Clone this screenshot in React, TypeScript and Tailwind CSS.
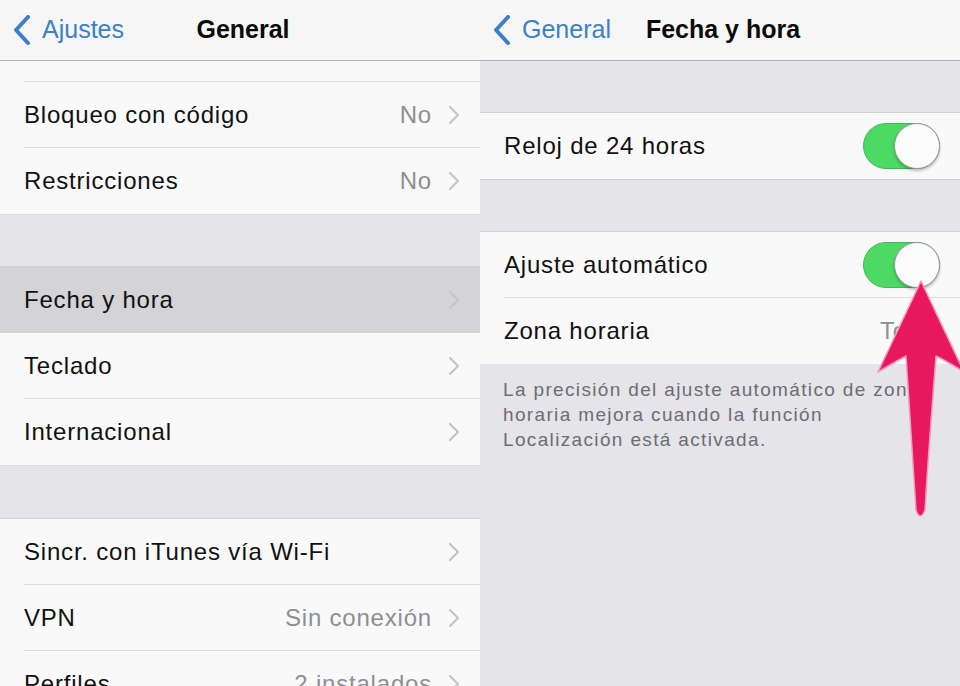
import { ReactNode } from "react";

const FONT = { fontFamily: '"Liberation Sans", Arial, sans-serif' };

const Chevron = () => (
  <svg width="12" height="20" viewBox="0 0 12 20" className="shrink-0">
    <path d="M2 2 L10 10 L2 18" fill="none" stroke="#c4c4c8" strokeWidth="2.2" strokeLinecap="round" strokeLinejoin="round" />
  </svg>
);

const BackChevron = () => (
  <svg width="20" height="30" viewBox="0 0 20 30" className="shrink-0">
    <path d="M16 2 L4 15 L16 28" fill="none" stroke="#3d80c6" strokeWidth="4" strokeLinecap="round" strokeLinejoin="round" />
  </svg>
);

const Toggle = () => (
  <div className="relative w-[77px] h-[46px] rounded-full bg-[#4cd964] border border-[#3fb956]">
    <div className="absolute right-[-1px] top-[-1px] w-[46px] h-[46px] rounded-full bg-[#fbfbfb] border border-[#9a9a9a] shadow-[0_2px_3px_rgba(0,0,0,0.25)]" />
  </div>
);

interface RowProps {
  label: string;
  detail?: string;
  chevron?: boolean;
  right?: ReactNode;
  last?: boolean;
  highlight?: boolean;
}

const Row = ({ label, detail, chevron = true, right, last, highlight }: RowProps) => (
  <div className={highlight ? "bg-[#d4d3d5] pl-[24px]" : "bg-[#f9f9f9] pl-[24px]"}>
    <div className={"h-[66px] flex items-center pr-[20px] " + (last ? "" : "border-b border-[#dcdcdf]")}>
      <span className="flex-1 text-[24px] tracking-[0.8px] text-[#111]">{label}</span>
      {detail && (
        <span className={"text-[24px] tracking-[0.8px] text-[#8e8e93] " + (chevron ? "mr-[16px]" : "")}>{detail}</span>
      )}
      {right}
      {chevron && !right && <Chevron />}
    </div>
  </div>
);

const NavBar = ({ back, title }: { back: string; title: string }) => (
  <div className="relative h-[61px] bg-[#f6f6f7] border-b border-[#b4b4b6] flex items-center">
    <div className="flex items-center pl-[12px] gap-[10px]">
      <BackChevron />
      <span className="text-[25px] text-[#3d80c6]">{back}</span>
    </div>
    <div className="absolute inset-0 flex items-center justify-center">
      <span className="text-[25px] font-bold text-[#0a0a0a] translate-x-[3px]">{title}</span>
    </div>
  </div>
);

const Gap = ({ h }: { h: string }) => <div className={"bg-[#e5e4e9] border-b border-[#d2d2d6] " + h} />;

const LeftPanel = () => (
  <div className="w-[480px] h-[686px] overflow-hidden bg-[#e5e4e9]">
    <NavBar back="Ajustes" title="General" />
    <div className="bg-[#f9f9f9] pl-[24px]">
      <div className="h-[21px] border-b border-[#dcdcdf]" />
    </div>
    <Row label="Bloqueo con código" detail="No" />
    <Row label="Restricciones" detail="No" last />
    <Gap h="h-[53px] border-t border-t-[#dcdcdf]" />
    <Row label="Fecha y hora" highlight last />
    <Row label="Teclado" />
    <Row label="Internacional" last />
    <Gap h="h-[54px] border-t border-t-[#dcdcdf]" />
    <Row label="Sincr. con iTunes vía Wi-Fi" />
    <Row label="VPN" detail="Sin conexión" />
    <Row label="Perfiles" detail="2 instalados" />
  </div>
);

const Arrow = () => (
  <svg width="110" height="260" viewBox="0 0 110 260" className="absolute left-[380px] top-[270px] pointer-events-none">
    <path
      d="M61 11 L18 102 Q35 92 46 86 C50 150 54 205 56 240 Q60 252 65 240 C67 205 71 150 76 86 Q88 92 104 102 Z"
      fill="#e8185f"
      stroke="#f59abd"
      strokeWidth="1.5"
      strokeLinejoin="round"
    />
  </svg>
);

const RightPanel = () => (
  <div className="relative w-[480px] h-[686px] overflow-hidden bg-[#e5e4e9]">
    <NavBar back="General" title="Fecha y hora" />
    <div className="h-[52px] border-b border-[#d2d2d6]" />
    <Row label="Reloj de 24 horas" right={<Toggle />} last />
    <div className="h-[53px] border-y border-[#d2d2d6]" />
    <Row label="Ajuste automático" right={<Toggle />} />
    <Row label="Zona horaria" detail="Tokio" chevron={false} last />
    <p className="pl-[23px] pr-[16px] pt-[13px] text-[19px] leading-[25px] tracking-[1.35px] text-[#6d6d72] whitespace-nowrap">
      La precisión del ajuste automático de zona
      <br />
      horaria mejora cuando la función
      <br />
      Localización está activada.
    </p>
    <Arrow />
  </div>
);

export default function App() {
  return (
    <div className="flex w-[960px] h-[686px] overflow-hidden" style={FONT}>
      <LeftPanel />
      <RightPanel />
    </div>
  );
}
